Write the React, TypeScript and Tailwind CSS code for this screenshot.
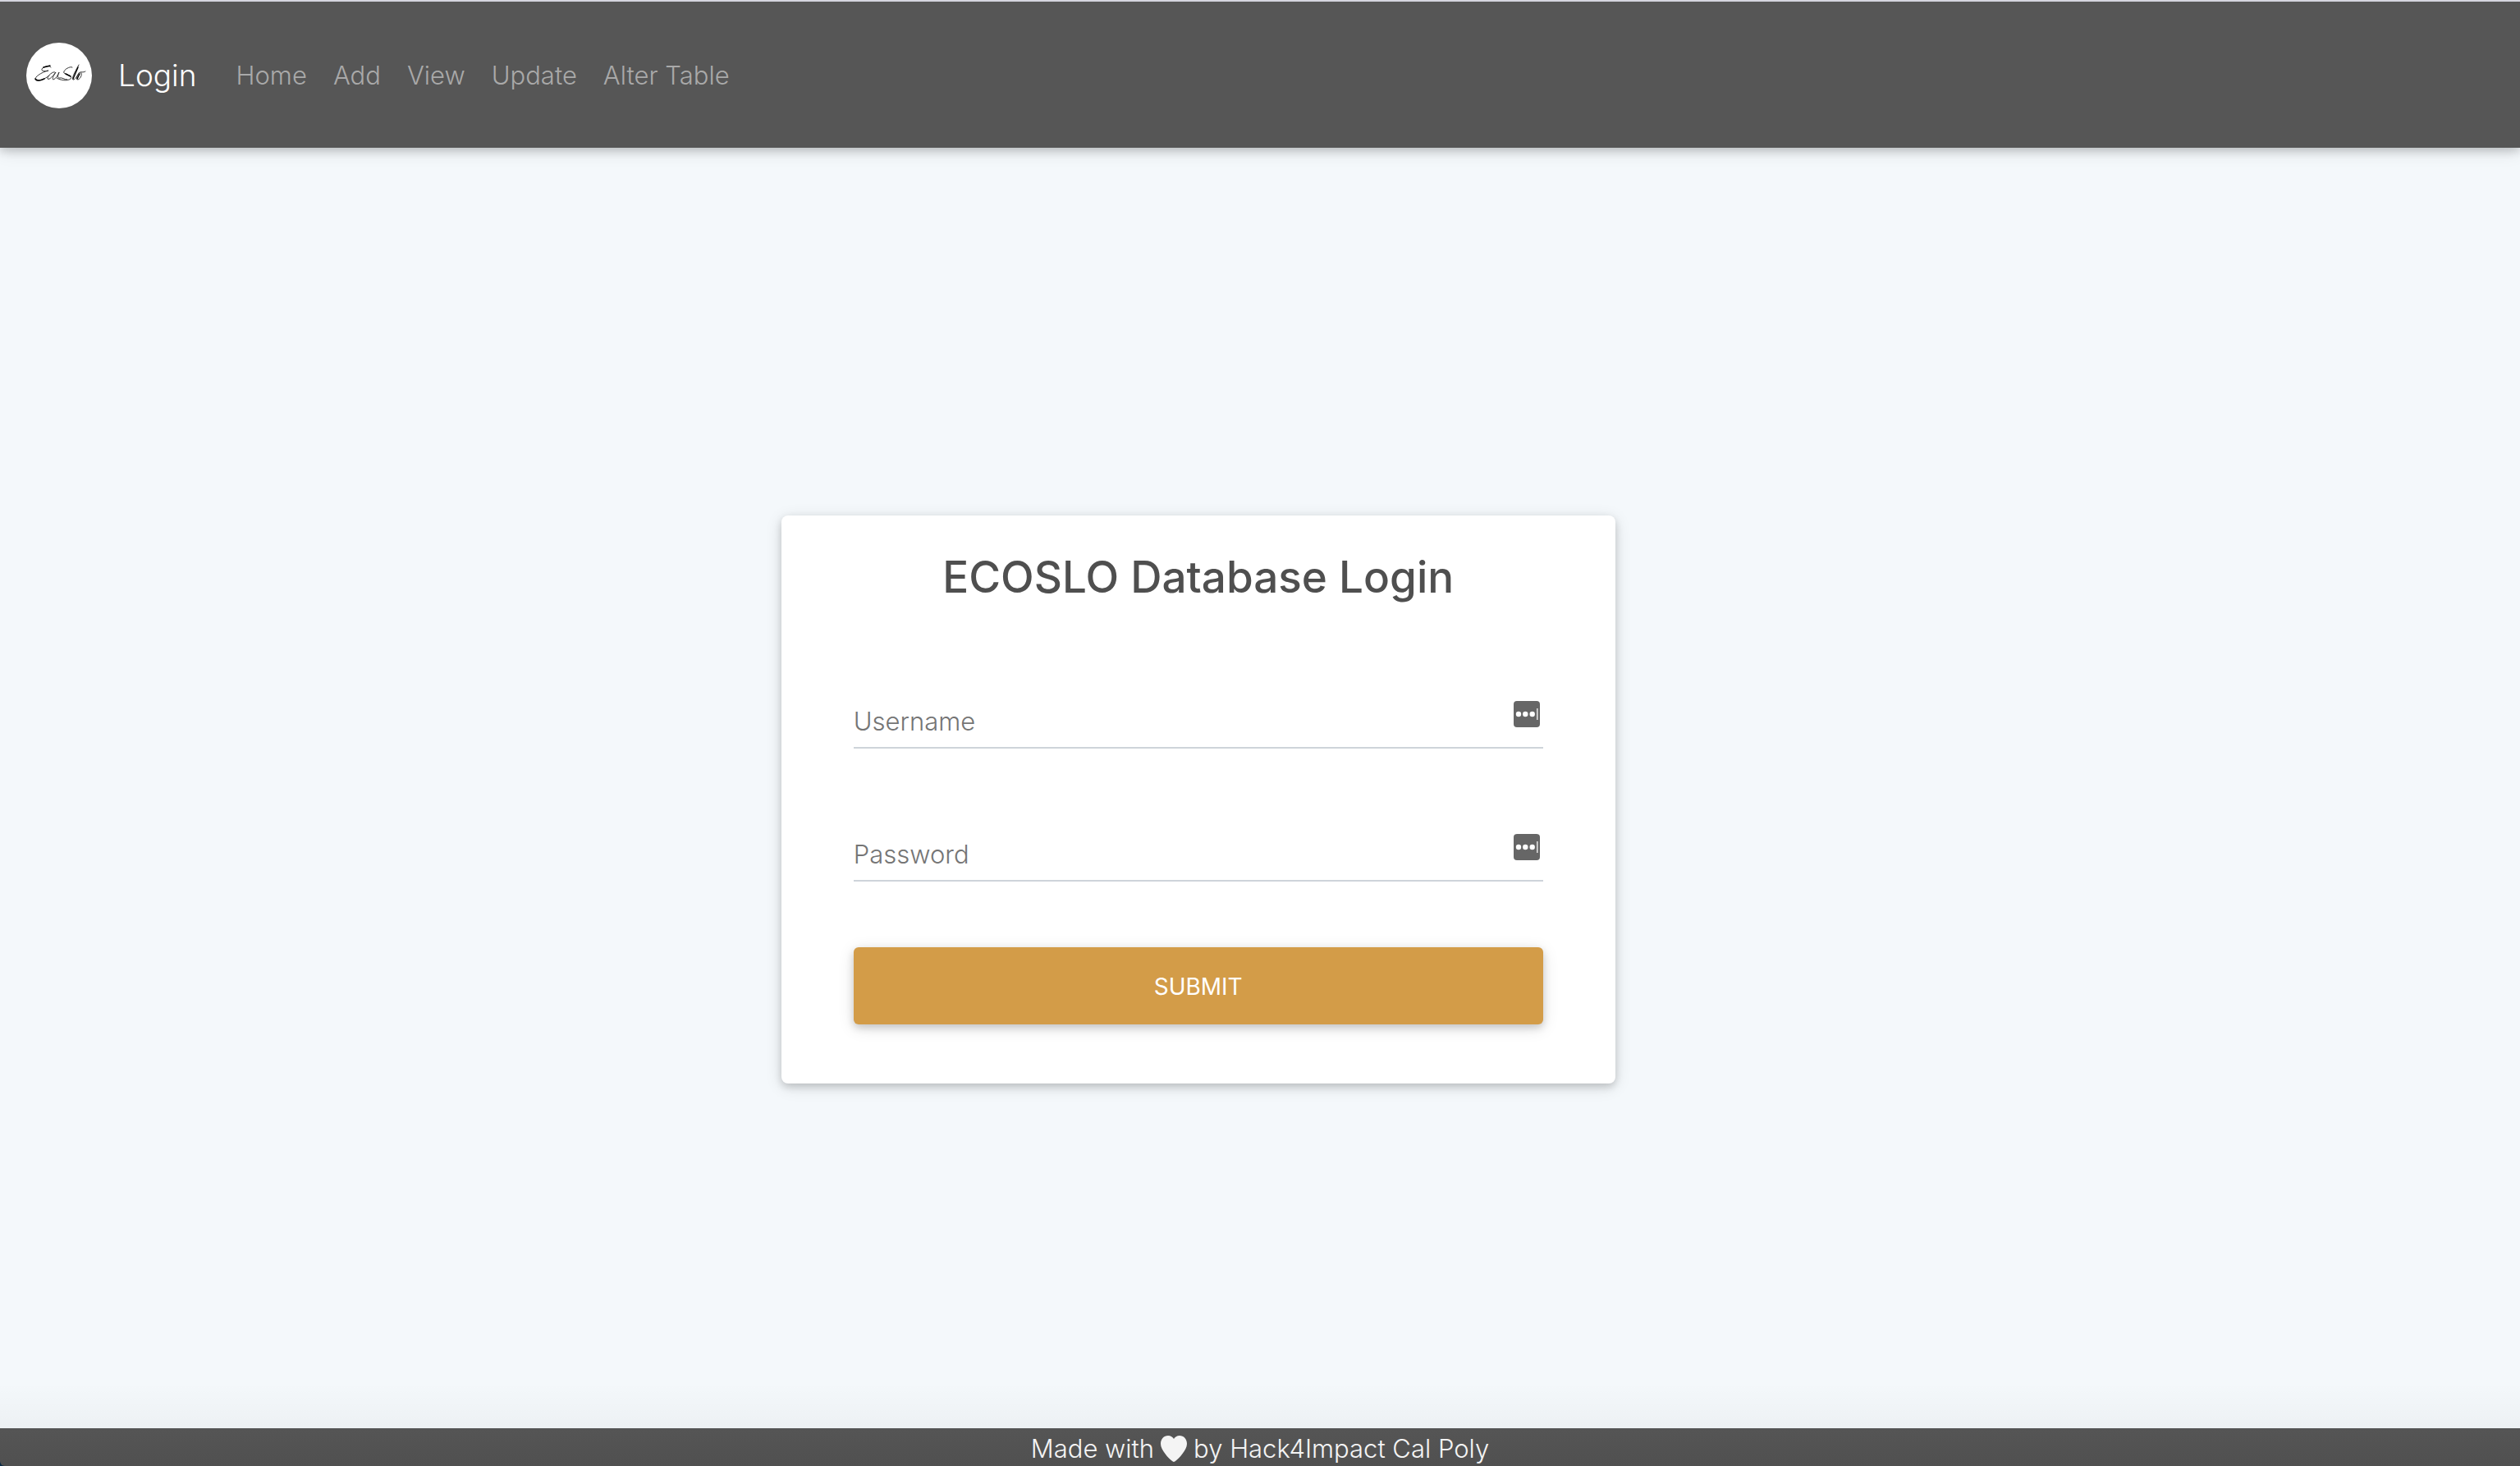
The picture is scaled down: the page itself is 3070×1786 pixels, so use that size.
import { useState } from "react";

const links = ["Home", "Add", "View", "Update", "Alter Table"];

function Logo() {
  return (
    <svg viewBox="0 0 80 80" className="size-20 shrink-0" role="img" aria-label="EcoSlo">
      <circle cx="40" cy="40" r="40" fill="#fff" />
      <g fill="none" stroke="#222" strokeWidth="0.9" strokeLinecap="round" strokeLinejoin="round">
        <path d="M30 30C29 27 21 29 19 32C18 35 23 35 27 34C18 36 10 42 11 45C13 48 22 45 28 40" />
        <path d="M35 36C33 34 25 41 26 44C28 46 33 40 36 36C33 40 31 45 33 45C36 44 39 39 40 36C38 40 38 43 40 43C44 42 46 45 50 45" />
        <path d="M56 30C53 28 44 34 46 37C50 39 57 41 54 44C50 47 42 46 37 43" />
        <path d="M64 27C61 33 55 42 57 45C59 46 62 40 65 36C62 40 60 45 63 45C66 44 69 38 66 36C65 35 69 37 72 35" />
      </g>
      <path d="M11 44C13 47 18 46 22 44M21 30L29 28M57 44L63 30M62 44L65 38M48 38L54 41" fill="none" stroke="#000" strokeWidth="1.4" strokeLinecap="round" />
    </svg>
  );
}

function PasswordManagerIcon() {
  return (
    <svg viewBox="0 0 32 32" className="mt-2 size-8 shrink-0" aria-hidden="true">
      <rect width="32" height="32" rx="4" fill="#666" />
      <circle cx="6" cy="16" r="3.2" fill="#fff" />
      <circle cx="14.3" cy="16" r="3.2" fill="#fff" />
      <circle cx="22.7" cy="16" r="3.2" fill="#fff" />
      <rect x="28" y="9" width="1.6" height="14" fill="#ddd" />
    </svg>
  );
}

function Field({ id, label, type }: { id: string; label: string; type: string }) {
  const [value, setValue] = useState("");
  return (
    <div className="flex items-start border-b-2 border-[#ced4da] pr-1">
      <input
        id={id}
        type={type}
        value={value}
        aria-label={label}
        placeholder={label}
        onChange={(e) => setValue(e.target.value)}
        className="h-16 min-w-0 flex-1 bg-transparent text-[31px] font-light text-[#495057] outline-none placeholder:text-[#757575]"
      />
      <PasswordManagerIcon />
    </div>
  );
}

export default function App() {
  return (
    <div className="flex min-h-screen flex-col bg-[#f4f8fb] font-['Inter',sans-serif] font-light">
      <header className="border-t-2 border-[#d5d5df] bg-[#565656] shadow-[0_4px_10px_0_rgba(0,0,0,0.16),0_4px_20px_0_rgba(0,0,0,0.12)]">
        <nav className="flex h-[178px] items-center px-8 pt-0.5">
          <a href="#login" className="flex items-center gap-8 text-[37px] text-white">
            <Logo />
            Login
          </a>
          <ul className="ml-12 flex gap-8 text-[31px] text-[#a9a9a9]">
            {links.map((l) => (
              <li key={l}>
                <a href={"#" + l.toLowerCase().replace(" ", "-")}>{l}</a>
              </li>
            ))}
          </ul>
        </nav>
      </header>

      <main className="flex flex-1 flex-col pt-[448px]">
        <form
          onSubmit={(e) => e.preventDefault()}
          className="ml-[31%] w-[1016px] rounded-lg bg-white px-[88px] pt-10 pb-[72px] shadow-[0_4px_10px_0_rgba(0,0,0,0.16),0_4px_20px_0_rgba(0,0,0,0.12)]"
        >
          <h1 className="text-center text-[53px] leading-[70px] font-medium text-[#4f4f4f]">ECOSLO Database Login</h1>
          <div className="mt-[108px] flex flex-col gap-24">
            <Field id="username" label="Username" type="text" />
            <Field id="password" label="Password" type="password" />
          </div>
          <button
            type="submit"
            className="mt-20 h-[94px] w-full rounded-md bg-[#d39c48] pt-0.5 text-[28px] font-normal text-white shadow-[0_4px_10px_0_rgba(0,0,0,0.16),0_4px_20px_0_rgba(0,0,0,0.12)]"
          >
            SUBMIT
          </button>
        </form>
        <div className="mt-auto h-14 bg-linear-to-b from-transparent to-black/3" />
      </main>

      <div className="bg-[#0b2a45]">
        <footer className="flex h-[46px] items-center justify-center gap-2 rounded-bl-md bg-linear-to-b from-[#555] to-[#505050] pt-1 text-[31px] text-[#f4f4f4]">
          <span>Made with</span>
          <svg viewBox="0 0 32 32" className="size-8" role="img" aria-label="love">
            <path d="M16 32C14 32 0 19 0 10C0 4 4 0 9 0C12 0 15 2 16 4C17 2 20 0 23 0C28 0 32 4 32 10C32 19 18 32 16 32Z" fill="#f4f4f4" />
          </svg>
          <span>by Hack4Impact Cal Poly</span>
        </footer>
      </div>
    </div>
  );
}
